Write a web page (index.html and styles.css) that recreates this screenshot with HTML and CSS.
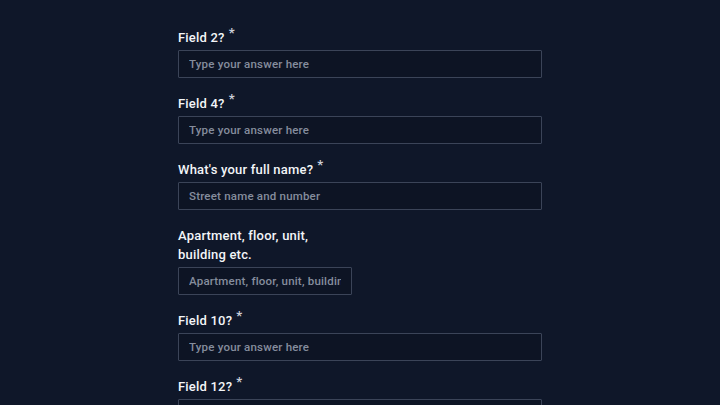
FILE: index.html
```html
<!DOCTYPE html>
<html lang="en">
<head>
<meta charset="utf-8">
<link rel="stylesheet" href="styles.css">
</head>
<body>
<form class="form">
  <div class="field">
    <label class="label">Field 2?<span class="req">*</span></label>
    <input class="input" type="text" placeholder="Type your answer here">
  </div>
  <div class="field">
    <label class="label">Field 4?<span class="req">*</span></label>
    <input class="input" type="text" placeholder="Type your answer here">
  </div>
  <div class="field">
    <label class="label">What's your full name?<span class="req">*</span></label>
    <input class="input" type="text" placeholder="Street name and number">
  </div>
  <div class="field narrow">
    <label class="label">Apartment, floor, unit, building etc.</label>
    <input class="input" type="text" placeholder="Apartment, floor, unit, building etc.">
  </div>
  <div class="field">
    <label class="label">Field 10?<span class="req">*</span></label>
    <input class="input" type="text" placeholder="Type your answer here">
  </div>
  <div class="field">
    <label class="label">Field 12?<span class="req">*</span></label>
    <input class="input" type="text" placeholder="Type your answer here">
  </div>
</form>
</body>
</html>
```
FILE: styles.css
```css
html, body {
  margin: 0;
  padding: 0;
  background: #0f1729;
  height: 100%;
  overflow: hidden;
}
body {
  font-family: "Roboto", "Noto Sans", sans-serif;
  color: #f3f5f8;
}
.form {
  width: 364px;
  margin: 0 auto;
  padding-top: 12px;
  display: flex;
  flex-direction: column;
}
.field {
  margin-top: 16px;
  display: flex;
  flex-direction: column;
}
.field.narrow {
  width: 174px;
}
.label {
  font-size: 13px;
  line-height: 19px;
  font-weight: 500;
  margin-bottom: 3px;
  letter-spacing: 0.2px;
}
.req {
  font-size: 13px;
  font-weight: 700;
  vertical-align: 5px;
  margin-left: 4px;
  color: #c9ced8;
  line-height: 0;
}
.input {
  box-sizing: border-box;
  width: 100%;
  height: 28px;
  margin: 0;
  padding: 0 10px;
  background: #0d1424;
  border: 1px solid #3b4458;
  border-radius: 1px;
  font-family: inherit;
  font-size: 11.5px;
  color: #f3f5f8;
  outline: none;
  letter-spacing: 0.2px;
}
.input::placeholder {
  color: #858d9d;
  font-weight: 500;
}
```
